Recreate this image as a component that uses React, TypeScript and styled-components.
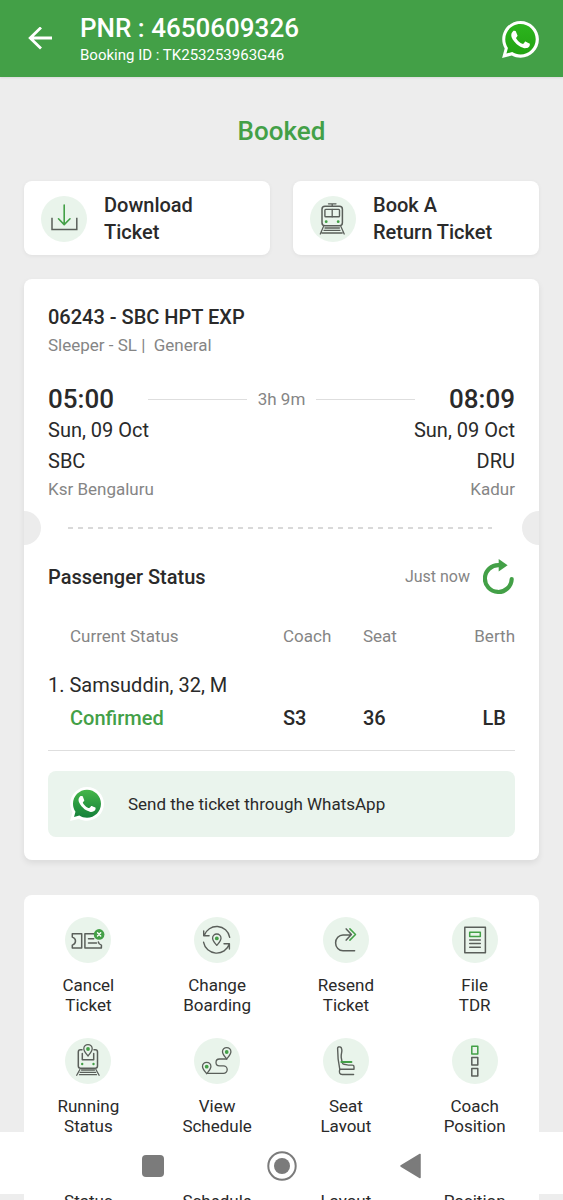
import React from "react";
import styled, { createGlobalStyle } from "styled-components";

const GREEN = "#43a047";
const DARK = "#5a5f5a";
const TINT = "#e9f4eb";

const GlobalStyle = createGlobalStyle`
  *, *::before, *::after { box-sizing: border-box; }
  body {
    margin: 0;
    background: #ededed;
    color: #2a2a2a;
    font-family: Roboto, "Liberation Sans", sans-serif;
  }
  h1, h2, p { margin: 0; font-weight: 400; }
  button { border: 0; padding: 0; margin: 0; background: none; color: inherit; font: inherit; cursor: pointer; }
`;

const Shell = styled.div`
  display: flex;
  flex-direction: column;
  height: 100vh;
  overflow: hidden;
`;

const Header = styled.header`
  flex: none;
  display: flex;
  align-items: center;
  gap: 28px;
  padding: 12px 24px 11px 28px;
  background: ${GREEN};
  color: #fff;
  box-shadow: 0 1px 2px rgba(0, 0, 0, 0.08);
`;

const HeaderText = styled.div`
  flex: 1;
`;

const Pnr = styled.h1`
  font-size: 26px;
  line-height: 32px;
  font-weight: 500;
`;

const BookingId = styled.p`
  font-size: 15px;
  line-height: 22px;
`;

const IconButton = styled.button`
  display: flex;
  flex: none;
`;

const Scroll = styled.main`
  flex: 1;
  min-height: 0;
  overflow-y: auto;
  scrollbar-width: none;
  padding: 0 24px;
`;

const BookedState = styled.h2`
  padding: 38px 0 34px;
  text-align: center;
  font-size: 26px;
  line-height: 32px;
  font-weight: 500;
  color: ${GREEN};
`;

const Actions = styled.div`
  display: grid;
  grid-template-columns: 1fr 1fr;
  gap: 23px;
  margin-bottom: 24px;
`;

const ActionButton = styled.button`
  display: flex;
  align-items: center;
  gap: 17px;
  padding: 11px 17px 9px;
  border-radius: 8px;
  background: #fff;
  box-shadow: 0 1px 4px rgba(0, 0, 0, 0.06);
  font-size: 20px;
  line-height: 27px;
  font-weight: 500;
  text-align: left;
`;

const Card = styled.section`
  margin-bottom: 35px;
  border-radius: 8px;
  background: #fff;
  box-shadow: 0 3px 6px rgba(0, 0, 0, 0.08);
`;

const Section = styled.div<{ $top: number; $bottom: number }>`
  padding: ${(p) => p.$top}px 24px ${(p) => p.$bottom}px;
`;

const Heading = styled.h2`
  font-size: 20px;
  line-height: 28px;
  font-weight: 500;
`;

const Muted = styled.p<{ $line: number }>`
  font-size: 17px;
  line-height: ${(p) => p.$line}px;
  color: #858585;
`;

const TimesRow = styled.div`
  display: flex;
  align-items: center;
  margin-top: 24px;
`;

const Time = styled.span`
  font-size: 26px;
  line-height: 32px;
  font-weight: 500;
`;

const Duration = styled.div`
  flex: 1;
  display: flex;
  align-items: center;
  gap: 11px;
  margin: 0 34px;

  &::before,
  &::after {
    content: "";
    flex: 1;
    height: 1px;
    background: #dedede;
  }
`;

const Stops = styled.div`
  display: flex;
  justify-content: space-between;
`;

const Stop = styled.div<{ $end?: boolean }>`
  text-align: ${(p) => (p.$end ? "right" : "left")};
`;

const StopLine = styled.p`
  font-size: 20px;
  line-height: 31px;
`;

const Perforation = styled.div`
  display: flex;
  align-items: center;
  justify-content: space-between;
`;

const Notch = styled.span<{ $end?: boolean }>`
  width: 17px;
  height: 34px;
  border-radius: ${(p) => (p.$end ? "17px 0 0 17px" : "0 17px 17px 0")};
  background: #ececec;
`;

const Dashes = styled.span`
  flex: 1;
  height: 2px;
  margin: 0 30px 0 27px;
  background: repeating-linear-gradient(90deg, #d9d9d9 0 5px, transparent 5px 10px);
`;

const StatusHeader = styled.div`
  display: flex;
  align-items: center;
  min-height: 37px;
`;

const Updated = styled.span`
  margin-left: auto;
  margin-right: 13px;
  font-size: 16px;
  line-height: 22px;
  color: #858585;
`;

const StatusTable = styled.table`
  width: 100%;
  margin-top: 29px;
  table-layout: fixed;
  border-collapse: collapse;
  border-bottom: 1px solid #dedede;
  text-align: left;
`;

const Column = styled.th<{ $width: string; $indent?: boolean; $end?: boolean }>`
  width: ${(p) => p.$width};
  padding: 0 0 20px ${(p) => (p.$indent ? 22 : 0)}px;
  font-size: 17px;
  line-height: 24px;
  font-weight: 400;
  color: #858585;
  text-align: ${(p) => (p.$end ? "right" : "left")};
`;

const Passenger = styled.th`
  padding: 0;
  font-size: 20px;
  line-height: 34px;
  font-weight: 400;
`;

const Value = styled.td<{ $confirmed?: boolean; $end?: boolean }>`
  padding: 0 ${(p) => (p.$end ? 9 : 0)}px 16px ${(p) => (p.$confirmed ? 22 : 0)}px;
  font-size: 20px;
  line-height: 32px;
  font-weight: 500;
  color: ${(p) => (p.$confirmed ? GREEN : "inherit")};
  text-align: ${(p) => (p.$end ? "right" : "left")};
`;

const ShareButton = styled.button`
  display: flex;
  align-items: center;
  gap: 24px;
  width: 100%;
  margin-top: 20px;
  padding: 16px 22px;
  border-radius: 8px;
  background: #eaf4ed;
  font-size: 17px;
  line-height: 24px;
  text-align: left;
`;

const Menu = styled.nav`
  display: grid;
  grid-template-columns: repeat(4, 1fr);
  row-gap: 23px;
  padding: 22px 0 24px;
  border-radius: 8px;
  background: #fff;
`;

const MenuItem = styled.button`
  display: flex;
  flex-direction: column;
  align-items: center;
  gap: 12px;
  font-size: 17px;
  line-height: 20px;
`;

const TwoLines = styled.span`
  white-space: pre-line;
`;

const SystemBar = styled.footer`
  flex: none;
  display: grid;
  grid-template-columns: repeat(3, 1fr);
  padding: 19px 88px 13px;
  background: #fff;
`;

const SystemButton = styled.button`
  display: flex;
  justify-content: center;
`;

const Strip = styled.div`
  flex: none;
  display: grid;
  grid-template-columns: repeat(4, 1fr);
  height: 6px;
  margin: 0 24px;
  overflow: hidden;
  background: #fff;
  font-size: 17px;
  line-height: 14px;
  text-align: center;
`;

const Round: React.FC<{ children: React.ReactNode }> = ({ children }) => (
  <svg width="46" height="46" viewBox="0 0 46 46" fill="none" stroke={DARK} strokeWidth="1.3" strokeLinecap="round" strokeLinejoin="round" aria-hidden="true">
    <circle cx="23" cy="23" r="23" fill={TINT} stroke="none" />
    {children}
  </svg>
);

const DownloadIcon = () => (
  <Round>
    <path d="M11 21.7v11.8h24.8V21.7" strokeWidth="1.5" strokeLinecap="butt" strokeLinejoin="miter" />
    <path d="M23.2 9v19.4M17.5 22.8l5.7 5.8 5.8-5.8" stroke={GREEN} strokeWidth="1.6" />
  </Round>
);

const TrainIcon = () => (
  <Round>
    <path d="M18.5 7.8H26M22.2 7.8v2.4" />
    <rect x="12" y="10.3" width="20.4" height="19.5" rx="3" strokeWidth="1.5" />
    <rect x="14.9" y="13.4" width="14.6" height="7.4" rx="0.8" strokeWidth="1.4" />
    <path d="M22.2 13.4v7.4" />
    <path d="M13.5 30.6L10.3 38M30.9 30.6l3.3 7.4M15 32h14.4M14 34.3h16M12 37h20.2" />
    <circle cx="16.2" cy="25.7" r="1.4" fill={GREEN} stroke="none" />
    <circle cx="28.2" cy="25.7" r="1.4" fill={GREEN} stroke="none" />
  </Round>
);

const CancelIcon = () => (
  <Round>
    <path d="M7.3 16.7h9.4v14.4H7.3v-3c1.8-.6 3.2-2 3.2-4s-1.4-3.500-3.200-4z" strokeWidth="1.5" />
    <path d="M29.5 16.7h-9.600v14.400h16.500v-3c-1.600-.5-2.800-1.500-3-3M23.500 21.700h5.200M23.500 26h8" strokeWidth="1.5" />
    <circle cx="34.1" cy="17.4" r="5.3" fill={GREEN} stroke="none" />
    <path d="M32.5 15.8l3.2 3.2M35.7 15.8l-3.2 3.2" stroke="#fff" strokeWidth="1.4" />
  </Round>
);

const Pin: React.FC<{ x: number; y: number }> = ({ x, y }) => (
  <g transform={`translate(${x} ${y})`}>
    <path d="M0 7c-1.5-2-4.2-4.6-4.2-7.2a4.2 4.2 0 0 1 8.4 0C4.2 2.4 1.5 5 0 7z" fill={TINT} />
    <circle r="1.9" fill={GREEN} stroke="none" />
  </g>
);

const ChangeIcon = () => (
  <Round>
    <path d="M10.2 18.5a13.2 13.2 0 0 1 25.5 1.8M9.7 14v4.8h5.4" strokeWidth="1.4" />
    <path d="M9.6 25.3a13.3 13.3 0 0 0 25.700 1.700M30 26.700h5.400V32" strokeWidth="1.4" />
    <Pin x={22.8} y={21.4} />
  </Round>
);

const ResendIcon = () => (
  <Round>
    <path d="M31.6 33.8H20a7.4 7.9 0 0 1 0-15.8h7.8M23.2 11.9l5.2 5.6-5.2 5.6" strokeWidth="1.5" />
    <path d="M26.9 11.9l5.6 5.6-5.6 5.6" stroke={GREEN} strokeWidth="1.5" />
  </Round>
);

const FileIcon = () => (
  <Round>
    <rect x="12.8" y="10.3" width="20.6" height="25.4" strokeWidth="1.5" />
    <rect x="17.7" y="15.3" width="10.6" height="4.2" stroke={GREEN} strokeWidth="1.5" />
    <path d="M17.7 23h10.6M17.7 26.6h10.6M17.7 30.2h10.6" strokeWidth="1.5" />
  </Round>
);

const RunningIcon = () => (
  <Round>
    <path d="M17 11.7h-1.500a2.200 2.200 0 0 0-2.200 2.200V28a2.200 2.200 0 0 0 2.200 2.200h14.800a2.200 2.200 0 0 0 2.200-2.200V13.900a2.200 2.200 0 0 0-2.200-2.200H29M17.300 15.500v6.200h11.400v-6.200" strokeWidth="1.5" />
    <path d="M14.9 31.5l-3.2 5.7M30.9 31.5l3.2 5.7M16.5 32h13M15.2 34.4h15.4M14.5 36.7h17" />
    <circle cx="17.2" cy="26" r="1.2" fill={GREEN} stroke="none" />
    <circle cx="28.5" cy="26" r="1.2" fill={GREEN} stroke="none" />
    <Pin x={23} y={11} />
  </Round>
);

const ScheduleIcon = () => (
  <Round>
    <path d="M32.7 21H25.4a3.4 3.4 0 0 0 0 6.8h4a3.8 3.8 0 0 1 0 7.6H12.7" />
    <Pin x={12.7} y={28.7} />
    <Pin x={32.7} y={14} />
  </Round>
);

const SeatIcon = () => (
  <Round>
    <path d="M16.8 31.3H31v-2.6c0-1-.6-1.6-1.6-1.6h-4.2c-1.8 0-2.6-.8-4.3-.8-1.2 0-1.5-.6-1.7-1.600l-1-5.400c-.2-1.800.1-3.300.5-5.200.4-1.700.1-4.800-1.400-5.100-1.300-.3-2.700-.2-2.700 1.200 0 6 .6 14.200 2.200 21.100z" strokeWidth="1.4" />
    <path d="M16.8 31.5c-1.100 2.800-.2 5 2.400 5h11.400" strokeWidth="1.4" />
    <path d="M18.3 24h10.2" stroke={GREEN} strokeWidth="1.8" />
  </Round>
);

const CoachIcon = () => (
  <Round>
    <rect x="19.8" y="8.3" width="6" height="7.7" stroke={GREEN} strokeWidth="1.5" />
    <rect x="19.8" y="19.4" width="6" height="7.6" strokeWidth="1.5" />
    <rect x="19.8" y="30.5" width="6" height="7.6" strokeWidth="1.5" />
  </Round>
);

const WhatsAppIcon: React.FC<{ size: number; id: string; from: string; to: string }> = ({ size, id, from, to }) => (
  <svg width={size} height={size} viewBox="0 0 24 24" aria-hidden="true">
    <defs>
      <linearGradient id={id} x1="0" y1="0" x2="0" y2="1">
        <stop offset="0" stopColor={from} />
        <stop offset="1" stopColor={to} />
      </linearGradient>
    </defs>
    <path fill="#fff" d="M.057 24l1.687-6.163c-1.041-1.804-1.588-3.849-1.587-5.946.003-6.556 5.338-11.891 11.893-11.891 3.181.001 6.167 1.240 8.413 3.488 2.245 2.248 3.481 5.236 3.480 8.414-.003 6.557-5.338 11.892-11.893 11.892-1.990-.001-3.951-.5-5.688-1.448L.057 24z" />
    <path fill={`url(#${id})`} d="M6.600 20.130c1.676.995 3.276 1.591 5.392 1.592 5.448 0 9.886-4.434 9.889-9.885.002-5.462-4.415-9.890-9.881-9.892-5.452 0-9.887 4.434-9.889 9.884-.001 2.225.651 3.891 1.746 5.634l-.999 3.648 3.742-.981z" />
    <path fill="#fff" d="M17.472 14.382c-.297-.149-1.758-.867-2.030-.967-.273-.099-.471-.148-.67.150-.197.297-.767.966-.94 1.164-.173.199-.347.223-.644.075-.297-.15-1.255-.463-2.390-1.475-.883-.788-1.480-1.761-1.653-2.059-.173-.297-.018-.458.130-.606.134-.133.298-.347.446-.52.149-.174.198-.298.298-.497.099-.198.050-.371-.025-.52-.075-.149-.669-1.612-.916-2.207-.242-.579-.487-.5-.669-.51-.173-.008-.371-.01-.57-.01-.198 0-.52.074-.792.372-.272.297-1.040 1.016-1.040 2.479 0 1.462 1.065 2.875 1.213 3.074.149.198 2.096 3.200 5.077 4.487.709.306 1.262.489 1.694.625.712.227 1.360.195 1.871.118.571-.085 1.758-.719 2.006-1.413.248-.694.248-1.289.173-1.413-.074-.124-.272-.198-.57-.347" />
  </svg>
);

const MENU = [
  { label: "Cancel\nTicket", Icon: CancelIcon },
  { label: "Change\nBoarding", Icon: ChangeIcon },
  { label: "Resend\nTicket", Icon: ResendIcon },
  { label: "File\nTDR", Icon: FileIcon },
  { label: "Running\nStatus", Icon: RunningIcon },
  { label: "View\nSchedule", Icon: ScheduleIcon },
  { label: "Seat\nLayout", Icon: SeatIcon },
  { label: "Coach\nPosition", Icon: CoachIcon },
];

export default function App() {
  return (
    <Shell>
      <GlobalStyle />
      <Header>
        <IconButton aria-label="Back">
          <svg width="24" height="24" viewBox="0 0 24 24" fill="none" stroke="#fff" strokeWidth="2.8" aria-hidden="true">
            <path d="M24 11H2.5M13 0.500L2.200 11 13 21.500" />
          </svg>
        </IconButton>
        <HeaderText>
          <Pnr>PNR : 4650609326</Pnr>
          <BookingId>Booking ID : TK253253963G46</BookingId>
        </HeaderText>
        <IconButton aria-label="Share on WhatsApp">
          <WhatsAppIcon size={37} id="wa-header" from="#2cb41e" to="#22a312" />
        </IconButton>
      </Header>

      <Scroll>
        <BookedState>Booked</BookedState>
        <Actions>
          <ActionButton>
            <DownloadIcon />
            <TwoLines>{"Download\nTicket"}</TwoLines>
          </ActionButton>
          <ActionButton>
            <TrainIcon />
            <TwoLines>{"Book A\nReturn Ticket"}</TwoLines>
          </ActionButton>
        </Actions>

        <Card>
          <Section $top={24} $bottom={10}>
            <Heading>06243 - SBC HPT EXP</Heading>
            <Muted $line={28}>Sleeper - SL |&nbsp; General</Muted>
            <TimesRow>
              <Time>05:00</Time>
              <Duration>
                <Muted $line={24}>3h 9m</Muted>
              </Duration>
              <Time>08:09</Time>
            </TimesRow>
            <Stops>
              <Stop>
                <StopLine>Sun, 09 Oct</StopLine>
                <StopLine>SBC</StopLine>
                <Muted $line={24}>Ksr Bengaluru</Muted>
              </Stop>
              <Stop $end>
                <StopLine>Sun, 09 Oct</StopLine>
                <StopLine>DRU</StopLine>
                <Muted $line={24}>Kadur</Muted>
              </Stop>
            </Stops>
          </Section>
          <Perforation>
            <Notch />
            <Dashes />
            <Notch $end />
          </Perforation>
          <Section $top={13} $bottom={23}>
            <StatusHeader>
              <Heading>Passenger Status</Heading>
              <Updated>Just now</Updated>
              <IconButton aria-label="Refresh status">
                <svg width="32" height="36" viewBox="0 0 32 36" aria-hidden="true">
                  <path d="M16 6.2a13.4 13.4 0 1 0 12.7 13.8" fill="none" stroke={GREEN} strokeWidth="4.2" strokeLinecap="round" />
                  <path d="M15.7 0l8.9 6.2-8.9 6.2z" fill={GREEN} />
                </svg>
              </IconButton>
            </StatusHeader>
            <StatusTable>
              <thead>
                <tr>
                  <Column $width="auto" $indent scope="col">Current Status</Column>
                  <Column $width="80px" scope="col">Coach</Column>
                  <Column $width="80px" scope="col">Seat</Column>
                  <Column $width="72px" $end scope="col">Berth</Column>
                </tr>
              </thead>
              <tbody>
                <tr>
                  <Passenger colSpan={4} scope="rowgroup">1. Samsuddin, 32, M</Passenger>
                </tr>
                <tr>
                  <Value $confirmed>Confirmed</Value>
                  <Value>S3</Value>
                  <Value>36</Value>
                  <Value $end>LB</Value>
                </tr>
              </tbody>
            </StatusTable>
            <ShareButton>
              <WhatsAppIcon size={34} id="wa-share" from="#45b649" to="#14803a" />
              Send the ticket through WhatsApp
            </ShareButton>
          </Section>
        </Card>

        <Menu aria-label="Ticket options">
          {MENU.map(({ label, Icon }) => (
            <MenuItem key={label}>
              <Icon />
              <TwoLines>{label}</TwoLines>
            </MenuItem>
          ))}
        </Menu>
      </Scroll>

      <SystemBar>
        <SystemButton aria-label="Recent apps">
          <svg width="30" height="30" viewBox="0 0 30 30" aria-hidden="true">
            <rect x="4" y="4" width="22" height="22" rx="4" fill="#7b7b7b" />
          </svg>
        </SystemButton>
        <SystemButton aria-label="Home">
          <svg width="30" height="30" viewBox="0 0 30 30" aria-hidden="true">
            <circle cx="15" cy="15" r="13.7" fill="none" stroke="#7b7b7b" strokeWidth="2" />
            <circle cx="15" cy="15" r="8" fill="#7b7b7b" />
          </svg>
        </SystemButton>
        <SystemButton aria-label="Previous screen">
          <svg width="30" height="30" viewBox="0 0 30 30" aria-hidden="true">
            <path d="M5 15L24 3.5v23z" fill="#7b7b7b" stroke="#7b7b7b" strokeWidth="1.5" strokeLinejoin="round" />
          </svg>
        </SystemButton>
      </SystemBar>
      <Strip aria-hidden="true">
        <span>Status</span>
        <span>Schedule</span>
        <span>Layout</span>
        <span>Position</span>
      </Strip>
    </Shell>
  );
}
